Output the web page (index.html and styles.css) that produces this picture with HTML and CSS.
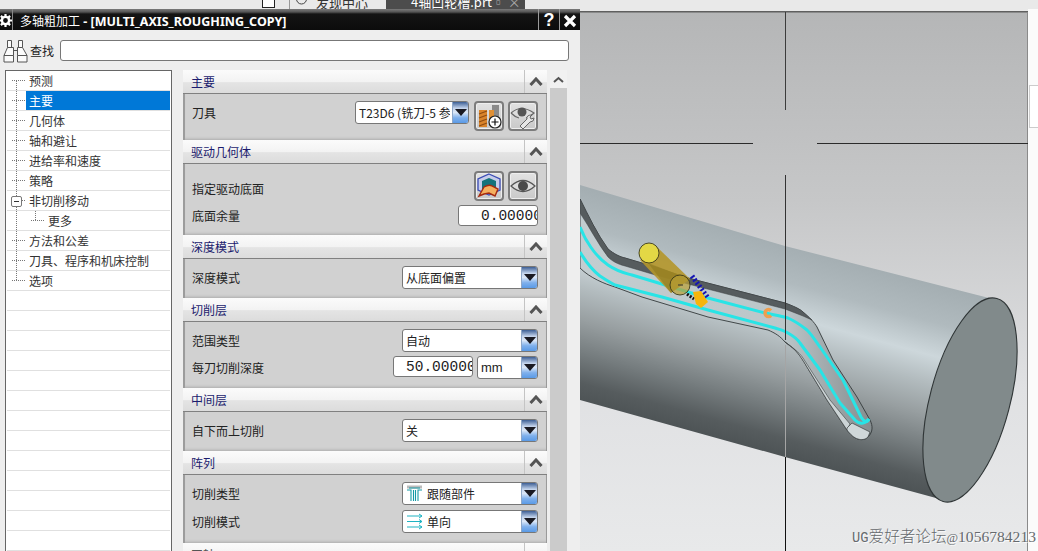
FILE: index.html
```html
<!DOCTYPE html>
<html lang="zh">
<head>
<meta charset="utf-8">
<title>多轴粗加工</title>
<link rel="stylesheet" href="styles.css">
</head>
<body>
<div class="page">
  <div class="strip">
    <span class="strip-box"></span>
    <span class="strip-sep"></span>
    <div class="strip-tab">
      <svg class="strip-ic" width="11" height="11" viewBox="0 0 11 11"><circle cx="5.5" cy="2" r="5" fill="none" stroke="#444"/></svg>
      <span>发现中心</span>
    </div>
    <div class="strip-active"><span>4轴凹轮槽.prt</span><span class="strip-x">▫ ×</span></div>
  </div>
  <div class="work">
    <section class="dialog">
      <header class="title">
        <span class="title-gear">
          <svg width="13" height="13" viewBox="0 0 13 13"><circle cx="6.5" cy="6.5" r="3.6" fill="none" stroke="#fff" stroke-width="2.4"/><path d="M6.5 0v3M6.5 10v3M0 6.5h3M10 6.5h3M1.9 1.9l2 2M9.1 9.1l2 2M1.9 11.1l2-2M9.1 3.9l2-2" stroke="#fff" stroke-width="2.2"/></svg>
        </span>
        <span class="title-text"><span class="title-cjk">多轴粗加工</span> - [MULTI_AXIS_ROUGHING_COPY]</span>
        <span class="title-btn">?</span>
        <span class="title-btn">
          <svg width="14" height="14" viewBox="0 0 14 14"><path d="M2 2l10 10M12 2L2 12" stroke="#fff" stroke-width="3.2"/></svg>
        </span>
      </header>
      <div class="search">
        <svg width="25" height="23" viewBox="0 0 25 23" fill="#fbfbfb" stroke="#555">
          <path d="M4.5 .5h4v7h-4zM15.5 .5h4v7h-4z"/>
          <path d="M4.5 7.500L1 15.500h9.500V7.500zM19.500 7.500L24 15.500h-9.500V7.500zM10.500 10.500h4"/>
          <path d="M1 15.500h9.500v6.500H1zM14.500 15.500H24v6.500h-9.500z"/>
        </svg>
        <span class="search-label">查找</span>
        <div class="search-box"></div>
      </div>
      <div class="main">
        <nav class="tree">
          <div class="t-row"><i class="twig twig-first"></i><span class="t-text">预测</span></div>
          <div class="t-row"><i class="twig"></i><span class="t-text t-sel">主要</span></div>
          <div class="t-row"><i class="twig"></i><span class="t-text">几何体</span></div>
          <div class="t-row"><i class="twig"></i><span class="t-text">轴和避让</span></div>
          <div class="t-row"><i class="twig"></i><span class="t-text">进给率和速度</span></div>
          <div class="t-row"><i class="twig"></i><span class="t-text">策略</span></div>
          <div class="t-row"><i class="twig twig-open"><b class="minus"></b></i><span class="t-text">非切削移动</span></div>
          <div class="t-row"><i class="twig twig-pass"></i><i class="twig twig-last twig-sub"></i><span class="t-text">更多</span></div>
          <div class="t-row"><i class="twig"></i><span class="t-text">方法和公差</span></div>
          <div class="t-row"><i class="twig"></i><span class="t-text">刀具、程序和机床控制</span></div>
          <div class="t-row"><i class="twig twig-last"></i><span class="t-text">选项</span></div>
          <div class="t-row"></div><div class="t-row"></div><div class="t-row"></div><div class="t-row"></div>
          <div class="t-row"></div><div class="t-row"></div><div class="t-row"></div><div class="t-row"></div>
          <div class="t-row"></div><div class="t-row"></div><div class="t-row"></div><div class="t-row"></div>
          <div class="t-row"></div>
        </nav>
        <div class="groups">
          <section class="group">
            <h3 class="g-head"><span>主要</span><em class="g-chev"><svg width="14" height="9" viewBox="0 0 14 9"><path d="M1.500 8L7 2l5.500 6" fill="none" stroke="#555" stroke-width="3"/></svg></em></h3>
            <div class="g-body">
              <div class="row">
                <label class="lab">刀具</label>
                <div class="ctl">
                  <div class="sel w114"><span class="sel-text">T23D6 (铣刀-5 参数)</span><span class="sel-arrow"></span></div>
                  <button class="btn">
                    <svg width="26" height="26" viewBox="0 0 26 26"><path d="M16 2h7v12h-7z" fill="#8a8a8a"/><path d="M3 7h8v17H3z" fill="#d9842b"/><path d="M3 11l8-3M3 15l8-3M3 19l8-3M3 23l8-3" stroke="#8f4d12" stroke-width="1.300"/><path d="M13 7h5v14h-5z" fill="#e09035"/><circle cx="19" cy="19" r="6" fill="#fff" stroke="#222" stroke-width="1.200"/><path d="M15.500 19h7M19 15.500v7" stroke="#111" stroke-width="1.200"/></svg>
                  </button>
                  <button class="btn">
                    <svg width="26" height="26" viewBox="0 0 26 26"><path d="M1 10q10-9 23 0-4 4-8 5M1 10q4 4 8 5" fill="#ddd" stroke="#666" stroke-width="1.200"/><circle cx="12" cy="9" r="4.500" fill="#555"/><path d="M22 12l-2 2 1 2 3-1q0 4-4 4l-7 7-3-3 7-7q-1-4 5-4z" fill="#e6e6e6" stroke="#666"/></svg>
                  </button>
                </div>
              </div>
            </div>
          </section>
          <section class="group">
            <h3 class="g-head"><span>驱动几何体</span><em class="g-chev"><svg width="14" height="9" viewBox="0 0 14 9"><path d="M1.500 8L7 2l5.500 6" fill="none" stroke="#555" stroke-width="3"/></svg></em></h3>
            <div class="g-body">
              <div class="row">
                <label class="lab lab-low">指定驱动底面</label>
                <div class="ctl">
                  <button class="btn">
                    <svg width="26" height="26" viewBox="0 0 26 26"><path d="M13 1l11 5v11l-11 5-11-5V6z" fill="#c7cdea" stroke="#3b4bb5" stroke-width="1.300"/><path d="M6 8l7-3 7 3v8H6z" fill="#14727c"/><path d="M3 23l5-9q5-3 8-1l6 3-3 7-6-3-5 1z" fill="#f4b060" stroke="#a52a10" stroke-width="1.400"/></svg>
                  </button>
                  <button class="btn">
                    <svg width="26" height="26" viewBox="0 0 26 26"><path d="M1 13q12-11 24 0-12 11-24 0z" fill="#ddd" stroke="#555" stroke-width="1.200"/><circle cx="13" cy="13" r="5" fill="#4a4a4a"/></svg>
                  </button>
                </div>
              </div>
              <div class="row">
                <label class="lab lab-21">底面余量</label>
                <div class="num num-w"><span>0.00000</span></div>
              </div>
            </div>
          </section>
          <section class="group">
            <h3 class="g-head"><span>深度模式</span><em class="g-chev"><svg width="14" height="9" viewBox="0 0 14 9"><path d="M1.500 8L7 2l5.500 6" fill="none" stroke="#555" stroke-width="3"/></svg></em></h3>
            <div class="g-body">
              <div class="row">
                <label class="lab">深度模式</label>
                <div class="sel w136"><span class="sel-text">从底面偏置</span><span class="sel-arrow"></span></div>
              </div>
            </div>
          </section>
          <section class="group">
            <h3 class="g-head"><span>切削层</span><em class="g-chev"><svg width="14" height="9" viewBox="0 0 14 9"><path d="M1.500 8L7 2l5.500 6" fill="none" stroke="#555" stroke-width="3"/></svg></em></h3>
            <div class="g-body">
              <div class="row">
                <label class="lab">范围类型</label>
                <div class="sel w136"><span class="sel-text">自动</span><span class="sel-arrow"></span></div>
              </div>
              <div class="row">
                <label class="lab">每刀切削深度</label>
                <div class="ctl">
                  <div class="num num-d"><span>50.00000</span></div>
                  <div class="sel w61"><span class="sel-text sel-latin">mm</span><span class="sel-arrow"></span></div>
                </div>
              </div>
            </div>
          </section>
          <section class="group">
            <h3 class="g-head"><span>中间层</span><em class="g-chev"><svg width="14" height="9" viewBox="0 0 14 9"><path d="M1.500 8L7 2l5.500 6" fill="none" stroke="#555" stroke-width="3"/></svg></em></h3>
            <div class="g-body">
              <div class="row">
                <label class="lab">自下而上切削</label>
                <div class="sel w136"><span class="sel-text">关</span><span class="sel-arrow"></span></div>
              </div>
            </div>
          </section>
          <section class="group">
            <h3 class="g-head"><span>阵列</span><em class="g-chev"><svg width="14" height="9" viewBox="0 0 14 9"><path d="M1.500 8L7 2l5.500 6" fill="none" stroke="#555" stroke-width="3"/></svg></em></h3>
            <div class="g-body g-body-wide">
              <div class="row">
                <label class="lab">切削类型</label>
                <div class="sel w136">
                  <svg class="sel-ic" width="17" height="17" viewBox="0 0 17 17"><path d="M1 2h15" stroke="#bbb" stroke-width="3"/><path d="M1 5h4v11M16 5h-4v11M7.500 5v11M9.500 5v11M3 3h11" fill="none" stroke="#139aa6" stroke-width="1.100"/></svg>
                  <span class="sel-text sel-text-ic">跟随部件</span><span class="sel-arrow"></span>
                </div>
              </div>
              <div class="row">
                <label class="lab">切削模式</label>
                <div class="sel w136">
                  <svg class="sel-ic" width="17" height="17" viewBox="0 0 17 17"><path d="M1 3h15l-3-2M1 8.500h15l-3-2M1 14h15l-3-2M16 3l-3 2M16 8.500l-3 2M16 14l-3 2" fill="none" stroke="#1fb3c2" stroke-width="1"/></svg>
                  <span class="sel-text sel-text-ic">单向</span><span class="sel-arrow"></span>
                </div>
              </div>
            </div>
          </section>
          <section class="group">
            <h3 class="g-head g-head-cut"><span>刀轴</span><em class="g-chev"></em></h3>
          </section>
        </div>
        <div class="scroll">
          <div class="scroll-up"><svg width="11" height="7" viewBox="0 0 11 7"><path d="M1 6l4.500-4L10 6" fill="none" stroke="#555" stroke-width="2"/></svg></div>
          <div class="scroll-thumb"></div>
        </div>
      </div>
    </section>
    <section class="view">
      <svg class="scene" width="458" height="542" viewBox="580 9 458 542">
        <defs>
          <linearGradient id="bg" x1="0" y1="12" x2="0" y2="551" gradientUnits="userSpaceOnUse">
            <stop offset="0" stop-color="#b5b6b7"/><stop offset=".35" stop-color="#c6c7c8"/><stop offset=".7" stop-color="#e0e1e3"/><stop offset="1" stop-color="#e8e9ea"/>
          </linearGradient>
          <linearGradient id="cyl" x1="997" y1="301" x2="943" y2="499" gradientUnits="userSpaceOnUse">
            <stop offset="0" stop-color="#a4aeb2"/><stop offset=".18" stop-color="#b0babe"/><stop offset=".34" stop-color="#cdd7db"/><stop offset=".47" stop-color="#b3bcbf"/><stop offset=".62" stop-color="#989fa1"/><stop offset=".78" stop-color="#757c7e"/><stop offset=".92" stop-color="#565c5e"/><stop offset="1" stop-color="#4e5456"/>
          </linearGradient>
          <linearGradient id="floor" x1="580" y1="0" x2="870" y2="0" gradientUnits="userSpaceOnUse">
            <stop offset="0" stop-color="#c3cdd0"/><stop offset=".7" stop-color="#bcc6c9"/><stop offset="1" stop-color="#868e90"/>
          </linearGradient>
        </defs>
        <rect x="580" y="9" width="448" height="542" fill="url(#bg)"/>
        <rect x="580" y="9" width="448" height="2" fill="#e9e9e9"/>
        <rect x="580" y="11" width="448" height="1.500" fill="#5f5f5f"/>
        <rect x="579" y="12" width="1" height="539" fill="#8a8a8a"/>
        <rect x="1027" y="12" width="1" height="539" fill="#8a8a8a"/>
        <rect x="1028" y="9" width="10" height="542" fill="#fbfbfb"/>
        <rect x="1029.500" y="85.500" width="9" height="42" fill="#fff" stroke="#ccc"/>
        <path d="M580 185L785 246L993 299L947 501L785 457L580 400z" fill="url(#cyl)"/>
        <ellipse cx="970" cy="400" rx="40" ry="105" transform="rotate(14.800 970 400)" fill="#818a8b" stroke="#2f3536" stroke-width="1.100"/>
        <path d="M580 199C588 215 597 234 608 249C614 254 620 257 625 258L652 266L688 278L785 303C793 306 800 309 803 312C810 318 814 322 817 327L833 360L857 397L870 420C873 426 873 432 868 437C865 440 861 440 858 439C854 438 850 434 847 430L827 400L807 367C803 360 799 354 795 350C792 347 789 345 785 342C780 336 775 333 768 330L708 317L642 297L615 287C605 284 590 278 580 268z" fill="url(#floor)" stroke="#33393a" stroke-width=".9"/>
        <path d="M580 199C588 215 597 234 608 249C614 254 620 257 625 258L652 266L688 278L785 303C793 306 800 309 803 312L812 320L803 316L785 309L688 284L652 274L625 266C617 264 612 261 608 257C598 244 590 228 580 213z" fill="#565c5e" stroke="#3a3f40" stroke-width=".5"/>
        <path d="M785 342C792 347 799 352 803 358L830 400L850 424L847 430L827 400L807 367C803 360 799 354 795 350z" fill="#ccd4d6" stroke="#3a3f40" stroke-width=".6"/>
        <path d="M847 428L852 423L870 432L868 437C865 440 861 440 858 439C854 438 850 434 847 430z" fill="#cfd7d9" stroke="#3a3f40" stroke-width=".7"/>
        <path d="M580 227C585 240 595 256 608 265C618 272 625 273 632 275L708 298L765 313C775 315 782 316 788 318C797 322 802 326 807 330C813 336 816 342 820 347L843 380L861 417Q866 425 869 419" fill="none" stroke="#28e4e6" stroke-width="3" stroke-linejoin="round"/>
        <path d="M580 252C586 262 592 270 600 276C606 280 611 283 615 285L662 297L708 310L775 328C781 330 785 331 788 333C795 337 798 340 800 343L820 370L840 403L855 420Q862 427 869 419" fill="none" stroke="#28e4e6" stroke-width="3" stroke-linejoin="round"/>
        <path d="M692 276L708 298" stroke="#1414b4" stroke-width="5" stroke-dasharray="2 2"/>
        <path d="M687 294L694 299" stroke="#111" stroke-width="3" stroke-dasharray="2 1.500"/>
        <path d="M693 292L701 291L708 302L701 308L696 304z" fill="#f6b50c"/>
        <path d="M640 260L657 247L690 279L671 293z" fill="#b4962a" fill-opacity=".9"/>
        <path d="M648 263L690 279L671 293z" fill="#8d7a20" fill-opacity=".6"/>
        <circle cx="649" cy="253" r="10" fill="#e3d845" stroke="#3c3a18" stroke-width=".9"/>
        <circle cx="680" cy="285" r="10" fill="#b9a035" fill-opacity=".7" stroke="#3c3a18" stroke-width=".9"/>
        <path d="M678 285h5" stroke="#333" stroke-width="1"/>
        <path d="M771 310.500a3.500 3.500 0 1 0 0 5" fill="none" stroke="#ef9f4d" stroke-width="3.500"/>
        <path d="M785.500 12V110" stroke="#3c3c3c" stroke-width="1"/>
        <path d="M785.500 175V340" stroke="#333" stroke-width="1"/>
        <path d="M785.500 345V457" stroke="#a5a5a5" stroke-width="1"/>
        <path d="M785.500 457V551" stroke="#111" stroke-width="1"/>
        <path d="M580 143.500H753M817 143.500H1028" stroke="#2b2b2b" stroke-width="1"/>
      </svg>
      <div class="mark"><span class="mark-lat">UG</span>爱好者论坛<span class="mark-at">@</span><span class="mark-num">1056784213</span></div>
    </section>
  </div>
</div>
</body>
</html>
```

FILE: styles.css
```css
* { box-sizing: border-box; }
html, body { margin: 0; padding: 0; }
body {
  width: 1038px;
  height: 551px;
  overflow: hidden;
  background: #eee;
  font-family: "Noto Sans CJK SC", "Liberation Sans", sans-serif;
  font-size: 12px;
  color: #222;
}
.page { display: flex; flex-direction: column; width: 1038px; height: 551px; overflow: hidden; }

.strip { display: flex; height: 9px; background: #e9e9e9; overflow: hidden; align-items: flex-start; flex: none; }
.strip-box { width: 13px; height: 8px; margin-left: 262px; background: #fff; border: 1px solid #222; border-top: 0; }
.strip-sep { width: 1px; height: 9px; margin-left: 14px; background: #999; }
.strip-tab { display: flex; width: 96px; padding-left: 6px; gap: 9px; line-height: 6px; font-size: 13px; color: #333; }
.strip-ic { flex: none; margin-top: -3px; }
.strip-active { display: flex; justify-content: space-between; width: 139px; height: 9px; padding: 0 8px 0 25px; background: #4c4c4c; color: #fff; font-size: 13px; line-height: 3px; white-space: nowrap; }
.strip-x { color: #aaa; }

.work { display: flex; flex: 1; min-height: 0; }
.dialog { display: flex; flex-direction: column; width: 580px; flex: none; background: #eeeeee; }

.title { display: flex; align-items: center; height: 21px; flex: none; color: #fff; background: linear-gradient(#7a7a7a 0, #555 3px, #141414 5px, #0c0c0c 100%); }
.title-gear { display: flex; align-items: center; justify-content: center; width: 14px; height: 21px; border-right: 1px solid #888; margin-left: -1px; padding-top: 2px; }
.title-text { flex: 1; margin-left: 7px; padding-top: 2px; font-family: "Noto Sans", "Noto Sans CJK SC", sans-serif; font-size: 12.500px; font-weight: 700; white-space: nowrap; }
.title-cjk { font-family: "Noto Sans CJK SC", sans-serif; font-size: 12px; font-weight: 400; }
.title-btn { display: flex; align-items: center; justify-content: center; width: 21px; height: 21px; padding-top: 2px; border-left: 1px solid #9a9a9a; font-family: "Liberation Sans", sans-serif; font-size: 18px; font-weight: 700; }

.search { display: flex; align-items: center; height: 40px; flex: none; padding: 0 11px 0 3px; }
.search svg { flex: none; margin-top: 2px; }
.search-label { margin-left: 2px; width: 30px; }
.search-box { flex: 1; height: 21px; background: #fff; border: 1px solid #777; border-radius: 3px; }

.main { display: flex; flex: 1; min-height: 0; padding-left: 5px; }

.tree { width: 167px; flex: none; background: #fff; border: 1px solid #666; border-bottom: 0; padding: 0 1px 0 0; overflow: hidden; margin-bottom: -2px; }
.t-row { display: flex; height: 20px; border-bottom: 1px solid #e0e0e0; padding-left: 4px; margin-left: 1px; }
.twig {
  display: block;
  flex: none;
  width: 15px;
  height: 20px;
  background-image: linear-gradient(#777 50%, transparent 50%), linear-gradient(to right, #777 50%, transparent 50%);
  background-size: 1px 2px, 2px 1px;
  background-position: 5px 0, 5px 9px;
  background-repeat: repeat-y, repeat-x;
  background-clip: content-box;
}
.twig-first { padding-top: 9px; }
.twig-last { padding-bottom: 10px; }
.twig-pass { background-image: linear-gradient(#777 50%, transparent 50%); background-size: 1px 2px; background-position: 5px 0; background-repeat: repeat-y; }
.twig-sub { margin-left: 4px; }
.twig-open { display: flex; padding-top: 5px; background-clip: border-box; }
.minus { display: block; width: 11px; height: 11px; border: 1px solid #777; border-radius: 2px; background: linear-gradient(#333, #333) center / 5px 1px no-repeat, #fff; }
.t-text { flex: 1; height: 19px; padding-left: 3px; line-height: 19px; font-style: normal; white-space: nowrap; color: #333; }
.t-sel { background: #0078d7; color: #fff; }

.groups { width: 364px; flex: none; margin-left: 11px; overflow: hidden; }
.group { margin: 0; }
.g-head { display: flex; justify-content: space-between; height: 24px; margin: 0; font-size: 12px; font-weight: 400; color: #1c1c6e; background: linear-gradient(#fbfbfb 0, #f3f3f3 50%, #e4e4e4 55%, #dcdcdc 100%); border-bottom: 1px solid #808080; }
.g-head span { padding-left: 8px; line-height: 23px; }
.g-head-cut span { color: #555; }
.g-chev { display: flex; align-items: center; justify-content: center; width: 23px; border-left: 1px solid #c4c4c4; }
.g-body { display: flex; flex-direction: column; gap: 4px; padding: 7px 8px 9px 7px; background: #d1d1d1; border-left: 2px solid #9c9c9c; border-right: 1px solid #9a9a9a; box-shadow: inset 0 -3px 3px -2px #aaa; }
.g-body-wide { gap: 5px; padding-bottom: 10px; }
.row { display: flex; justify-content: space-between; align-items: flex-start; }
.lab { line-height: 23px; color: #222; white-space: nowrap; }
.lab-low { padding-top: 6px; }
.lab-21 { line-height: 21px; }
.ctl { display: flex; gap: 4px; }

.sel { display: flex; align-items: center; height: 23px; background: #fff; border: 1px solid #777; border-radius: 3px; overflow: hidden; }
.w114 { width: 114px; margin-right: 1px; }
.w136 { width: 136px; }
.w61 { width: 61px; }
.sel-text { flex: 1; min-width: 0; padding-left: 3px; white-space: nowrap; overflow: hidden; line-height: 21px; font-size: 12px; }
.sel-latin { font-family: "Liberation Sans", sans-serif; font-size: 13px; }
.sel-text-ic { padding-left: 4px; }
.sel-ic { flex: none; margin-left: 3px; }
.sel-arrow { position: relative; flex: none; width: 16px; height: 21px; background: linear-gradient(#3d5f95 0, #c4d4ec 30%, #dbe7f7 50%, #7fb0ec 75%, #5a9ae6 100%); border-left: 1px solid #8ea7c8; }
.sel-arrow::after { content: ""; position: absolute; left: 2px; top: 7px; border-left: 6px solid transparent; border-right: 6px solid transparent; border-top: 7px solid #1a1a22; }
.w114 .sel-text { margin-right: 2px; }

.btn { display: flex; align-items: center; justify-content: center; width: 30px; height: 30px; padding: 0; background: linear-gradient(#e2e2e2, #c9c9c9); border: 2px solid #7c7c7c; border-radius: 4px; box-shadow: inset 0 0 0 1px #eee; }

.num { height: 21px; overflow: hidden; background: #fff; border: 1px solid #777; border-radius: 3px; font-family: "Liberation Mono", monospace; font-size: 14.500px; line-height: 20px; color: #222; white-space: nowrap; }
.num-w { width: 80px; padding-left: 22px; }
.num-d { width: 80px; padding-left: 12px; }

.scroll { width: 17px; flex: none; margin-left: 3px; background: #c9c9c9; display: flex; flex-direction: column; }
.scroll-up { display: flex; align-items: center; justify-content: center; height: 18px; background: #f1f1f1; }
.scroll-thumb { flex: 1; background: #cbcbcb; }

.view { position: relative; flex: 1; min-width: 0; overflow: hidden; }
.scene { display: block; }
.mark { position: absolute; right: 2px; bottom: 3px; font-family: "Noto Sans CJK SC", serif; font-size: 15.600px; line-height: 18px; font-weight: 300; white-space: nowrap; color: #666a6e; text-shadow: 1px 1px 0 rgba(255,255,255,.85); }
.mark-lat { font-family: "Liberation Mono", monospace; font-size: 13.800px; }
.mark-at { font-family: "Liberation Serif", serif; font-size: 12.500px; }
.mark-num { font-family: "Liberation Serif", serif; font-size: 15.600px; }
```
